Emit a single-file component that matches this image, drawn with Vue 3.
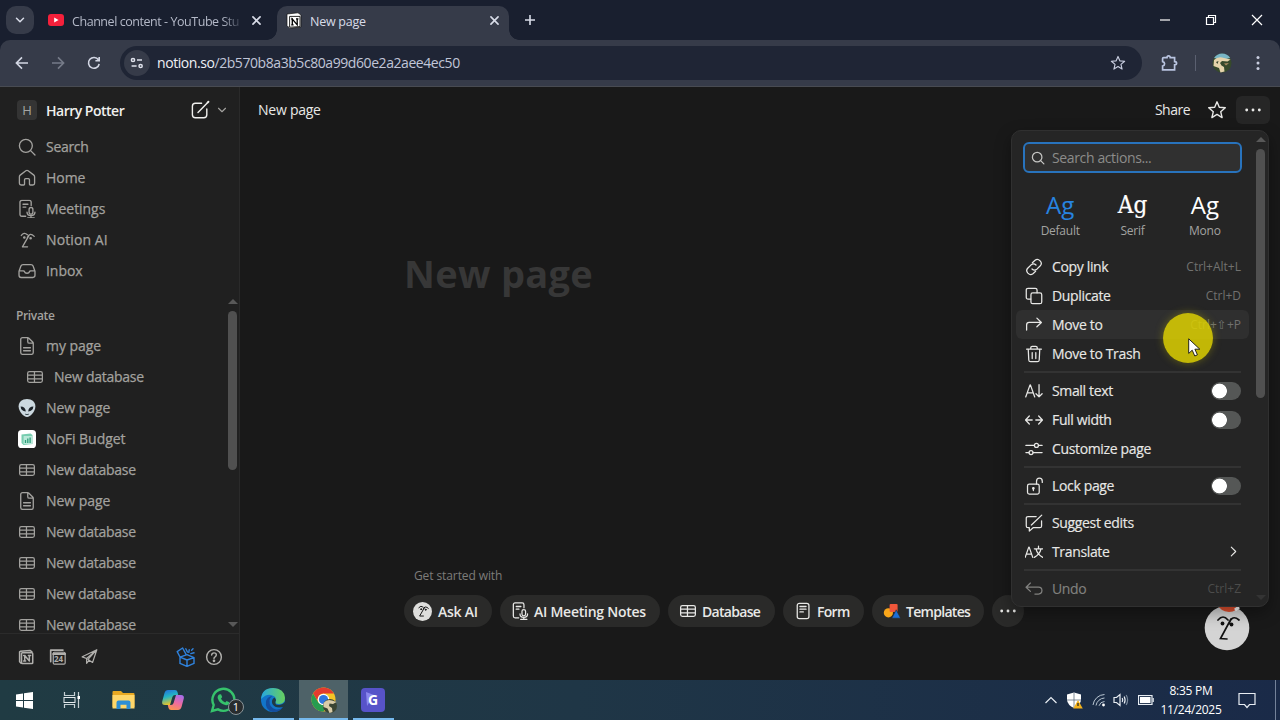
<template>
  <svg class="defs" width="0" height="0">
    <symbol id="i-search" viewBox="0 0 20 20"><circle cx="8.8" cy="8.8" r="6.8" /><path d="M13.8 13.8 18.4 18.4" /></symbol>
    <symbol id="i-home" viewBox="0 0 20 20"><path d="M2 8.6 Q2 7.6 2.8 7L8.8 2.4Q10 1.5 11.2 2.4L17.2 7Q18 7.6 18 8.6V15.6Q18 17.4 16.2 17.4H13.4Q12.6 17.4 12.6 16.6V11.8Q12.6 10.6 11.4 10.6H8.6Q7.4 10.6 7.4 11.8V16.6Q7.4 17.4 6.6 17.4H3.8Q2 17.4 2 15.6Z" /></symbol>
    <symbol id="i-meeting" viewBox="0 0 20 20"><path d="M8.6 17.6H4.6Q2.6 17.6 2.6 15.6V3Q2.6 1 4.6 1H12.4Q14.4 1 14.4 3V6.4M5.8 5H11M5.8 8H8.8" /><rect x="12.2" y="8.4" width="4" height="7" rx="2" /><path d="M10 13.2Q10 17 14.2 17Q18.4 17 18.4 13.2M14.2 17V19.3M10.8 19.4H17.6" /></symbol>
    <symbol id="i-face" viewBox="0 0 20 20"><path d="M4 5.2Q6.8 1.2 10.4 4.4M10.4 7.2Q13 1.6 17.6 6.2M12.4 4.6L5.2 17.2H10.6" /><circle cx="7.2" cy="7.4" r=".7" fill="currentColor" /><circle cx="13.8" cy="8.2" r=".7" fill="currentColor" /></symbol>
    <symbol id="i-inbox" viewBox="0 0 20 20"><path d="M1.6 10.2L3.6 4.8Q4.2 3.2 5.8 3.2H14.2Q15.8 3.2 16.4 4.8L18.4 10.2V14.6Q18.4 16.8 16.2 16.8H3.8Q1.6 16.8 1.6 14.6ZM1.8 9.8H6.2Q7.2 9.8 7.4 10.8Q7.8 12.4 10 12.4Q12.2 12.4 12.6 10.8Q12.8 9.8 13.8 9.8H18.2" /></symbol>
    <symbol id="i-page" viewBox="0 0 20 20"><path d="M3.4 3.2Q3.4 1.2 5.4 1.2H10.6Q11.4 1.2 12 1.8L16 5.8Q16.6 6.4 16.6 7.2V16.8Q16.6 18.8 14.6 18.8H5.4Q3.4 18.8 3.4 16.8ZM10.8 1.4V5.4Q10.8 7 12.4 7H16.4M6.4 11.8H13.6M6.4 15H13.6" /></symbol>
    <symbol id="i-table" viewBox="0 0 20 20"><rect x="1.8" y="4" width="16.4" height="12" rx="2" /><path d="M2 8H18M2 12H18M9.4 4V16" /></symbol>
    <symbol id="i-compose" viewBox="0 0 20 20"><path d="M11.6 3.2H5.4Q2.4 3.2 2.4 6.2V14.8Q2.4 17.8 5.4 17.8H13.8Q16.8 17.8 16.8 14.8V9M8 12.4L17 3.2" /><path d="M17.6 2.6L18.4 1.8" stroke-width="2" /></symbol>
    <symbol id="i-down" viewBox="0 0 20 20"><path d="M3 6.5L10 13.5L17 6.5" /></symbol>
    <symbol id="i-right" viewBox="0 0 20 20"><path d="M6 2L14 10L6 18" /></symbol>
    <symbol id="i-close" viewBox="0 0 20 20"><path d="M3.5 3.5L16.5 16.5M16.5 3.5L3.5 16.5" /></symbol>
    <symbol id="i-star" viewBox="0 0 20 20"><path d="M10 1.8L12.3 7.3L18.3 7.8L13.7 11.7L15.1 17.6L10 14.4L4.9 17.6L6.3 11.7L1.7 7.8L7.7 7.3Z" /></symbol>
    <symbol id="i-dots" viewBox="0 0 20 20"><g fill="currentColor" stroke="none"><circle cx="3" cy="10" r="1.6" /><circle cx="10" cy="10" r="1.6" /><circle cx="17" cy="10" r="1.6" /></g></symbol>
    <symbol id="i-link" viewBox="0 0 20 20"><path d="M8.2 5.2L11.2 2.6Q14 .4 16.8 3.2Q19.4 6 17 8.6L13.2 12.4Q10.4 14.6 7.8 12.2M11.8 14.8L8.8 17.4Q6 19.6 3.2 16.8Q.6 14 3 11.4L6.8 7.6Q9.6 5.4 12.2 7.8" /></symbol>
    <symbol id="i-duplicate" viewBox="0 0 20 20"><rect x="6.6" y="6.6" width="12" height="12" rx="2" /><path d="M6.4 13.4H3.4Q1.4 13.4 1.4 11.4V3.4Q1.4 1.4 3.4 1.4H11.4Q13.4 1.4 13.4 3.4V6.4" /></symbol>
    <symbol id="i-move" viewBox="0 0 20 20"><path d="M1.8 15.6V10Q1.8 7.2 4.6 7.2H18M13.2 2.4L18.2 7.2L13.2 12" /></symbol>
    <symbol id="i-trash" viewBox="0 0 20 20"><path d="M1.8 4.6H18.2M6.4 4.4V3Q6.4 1.4 8 1.4H12Q13.6 1.4 13.6 3V4.4M3.6 4.8L4.2 16.6Q4.3 18.6 6.3 18.6H13.7Q15.7 18.6 15.8 16.6L16.4 4.8M8 8.4V15M12 8.4V15" /></symbol>
    <symbol id="i-small" viewBox="0 0 20 20"><path d="M.8 16.6L5.6 3.2H6L10.8 16.6M2.6 12H9M15.6 3V16.4M12.2 13L15.6 16.6L19 13" /></symbol>
    <symbol id="i-width" viewBox="0 0 20 20"><path d="M8 10H.8M4.8 5.6L.6 10L4.8 14.4M12 10H19.2M15.2 5.6L19.4 10L15.2 14.4" /></symbol>
    <symbol id="i-sliders" viewBox="0 0 20 20"><path d="M1 6H10M15 6H19M1 14H4.4M9 14H19" /><circle cx="12.7" cy="6" r="2.2" /><circle cx="6.7" cy="14" r="2.2" /></symbol>
    <symbol id="i-lock" viewBox="0 0 20 20"><rect x="2.8" y="8" width="13" height="11" rx="2" /><path d="M12.8 7.8V4.6Q12.8 1.2 16 1.2Q19.2 1.2 19.2 4.6V6M9.3 12.4V15" /><circle cx="9.3" cy="12.6" r=".8" fill="currentColor" /></symbol>
    <symbol id="i-suggest" viewBox="0 0 20 20"><path d="M12.4 2.8H3.4Q1.4 2.8 1.4 4.8V13.2Q1.4 15.2 3.4 15.2H4.8V19L9 15.2H16.4Q18.4 15.2 18.4 13.2V7.6M8 11.4L18.6 1.2M8 11.4L7 12.2" /></symbol>
    <symbol id="i-translate" viewBox="0 0 20 20"><path d="M.2 16L4.2 4.6H4.6L8.6 16M1.6 12.4H7.2M10.4 6.4H19.8M15 3.6V6.2M17.8 6.6Q16.6 12.4 10.4 16M12.2 6.6Q13.6 12.6 19.8 16" /></symbol>
    <symbol id="i-undo" viewBox="0 0 20 20"><path d="M6 3.4L1.2 8L6 12.6M1.4 8H15Q18.8 8 18.8 11.8Q18.8 15.6 15 15.6H11" /></symbol>
    <symbol id="i-form" viewBox="0 0 20 20"><rect x="3.6" y="1.4" width="13" height="17.2" rx="2.4" /><path d="M6.6 5H13.4M6.6 8H13.4M6.6 11H10.4" /></symbol>
    <symbol id="i-cube" viewBox="0 0 20 20"><path d="M3.8 17.6L2 16V3.6L3 2.8L15.4 2L17.4 3.6" /><rect x="4.4" y="4.8" width="14" height="13.4" rx="1" /><path d="M8.4 15V8L14.2 15V8M7 8H8.8M13 8H15.8M7 15H9.6" /></symbol>
    <symbol id="i-calendar" viewBox="0 0 20 20"><path d="M2 16V2.4H16.4" stroke-width="2" /><rect x="5" y="5" width="14" height="14" rx="1.4" /><path d="M5 7H19" stroke-width="2.4" /></symbol>
    <symbol id="i-send" viewBox="0 0 20 20"><path d="M1.4 10.4L18.6 2L13.6 17L8.2 13.4L18.4 2.2M1.4 10.4L6.6 12.4V18L9.6 14.4M6.6 12.4L18.4 2.2" /></symbol>
    <symbol id="i-gift" viewBox="0 0 20 20"><path d="M4 10.2L11 7.6L18 10.6V16.4L11 19.4L4 16.4ZM4 10.2L11 13L18 10.6M11 13V19.2M4 10L1.2 4.6L6.6 1L9.8 6.8M9.8 1.8L11.4 5M12.8 5.4L13.2 2.8M14.8 6.6L18 5.8M15.6 3.2L17 1.8" /></symbol>
    <symbol id="i-help" viewBox="0 0 20 20"><circle cx="10" cy="10" r="8.2" /><path d="M7.4 7.8Q7.6 5.4 10 5.4Q12.6 5.4 12.6 7.6Q12.6 9 11.2 9.8Q10 10.4 10 11.8" /><circle cx="10" cy="14.2" r=".7" fill="currentColor" /></symbol>
  </svg>

  <div class="screen">
    <div class="tabs">
      <div class="tab-search"><svg class="icon s10"><use href="#i-down" /></svg></div>
      <div class="tab">
        <svg width="16" height="12" viewBox="0 0 16 12"><rect width="16" height="12" rx="3" fill="#f5203b" /><path d="M6.2 3.4L10.6 6L6.2 8.6Z" fill="#fff" /></svg>
        <span class="tab-title faded">Channel content - YouTube Stu</span>
        <svg class="icon s11 bold"><use href="#i-close" /></svg>
      </div>
      <div class="tab active">
        <svg width="16" height="17" viewBox="0 0 16 17"><path d="M1 2L12 .8L15 3V15L3.6 16.2L1 13.4Z" fill="#fff" stroke="#111" stroke-width=".7" /><path d="M3.6 4.4H14V14.6L3.6 15.2Z" fill="#fff" stroke="#111" stroke-width=".9" /><path d="M6.3 12.8V7L11.2 12.8V6.8M5.2 7H7M10 6.8H12.4M5.2 12.8H7.6" fill="none" stroke="#000" stroke-width="1.3" /></svg>
        <span class="tab-title">New page</span>
        <svg class="icon s11 bold"><use href="#i-close" /></svg>
      </div>
      <svg class="plus" width="12" height="12" viewBox="0 0 12 12"><path d="M6 1V11M1 6H11" /></svg>
      <div class="window-buttons">
        <span><svg width="12" height="12" viewBox="0 0 12 12"><path d="M1 6H11" /></svg></span>
        <span><svg width="12" height="12" viewBox="0 0 12 12"><path d="M1.5 3.5H8.5V10.5H1.5ZM3.5 3.5V1.5H10.5V8.5H8.5" /></svg></span>
        <span><svg width="12" height="12" viewBox="0 0 12 12"><path d="M1 1L11 11M11 1L1 11" /></svg></span>
      </div>
    </div>

    <div class="toolbar">
      <span class="nav"><svg width="14" height="14" viewBox="0 0 14 14"><path d="M13 7H1.6M7 1.4L1.4 7L7 12.6" /></svg></span>
      <span class="nav off"><svg width="14" height="14" viewBox="0 0 14 14"><path d="M1 7H12.4M7 1.4L12.6 7L7 12.6" /></svg></span>
      <span class="nav"><svg width="14" height="14" viewBox="0 0 14 14"><path d="M12.2 8A5.4 5.4 0 1 1 11.4 3.8M12.2 1V4.8H8.4" /></svg></span>
      <div class="omnibox">
        <span class="site"><svg width="14" height="12" viewBox="0 0 14 12"><circle cx="3" cy="3" r="1.6" /><path d="M7 3H12M1.6 9H6.6" /><circle cx="10.6" cy="9" r="1.6" /></svg></span>
        <span class="url">notion.so<i>/2b570b8a3b5c80a99d60e2a2aee4ec50</i></span>
        <svg class="icon s16"><use href="#i-star" /></svg>
      </div>
      <svg class="puzzle" width="18" height="18" viewBox="0 0 18 18"><path d="M3.6 3.6H7Q7 1.8 8.6 1.8Q10.2 1.8 10.2 3.6H14.6V7.6Q16.6 7.6 16.6 9.2Q16.6 10.8 14.6 10.8V15.8H2.6V12Q4.6 11.6 4.6 9.8Q4.6 8 2.6 7.6V4.6Q2.6 3.6 3.6 3.6Z" /></svg>
      <span class="divider"></span>
      <svg class="avatar" width="20" height="20" viewBox="0 0 20 20"><circle cx="10" cy="10" r="9.6" fill="#374a2c" /><path d="M2 5Q5 .4 10 .4Q15.5 .4 18.2 5Q10 7.5 2 5Z" fill="#79b6c6" /><path d="M2 7Q6 3 12 5L18.5 6.5L15.5 8.5L10 8L8 10L9.5 12.5L12 14L12.5 18.5L8.5 19.5L7 15L1.5 13Z" fill="#e5d3ab" /><path d="M4 9L6.500 8L5.500 11Z" fill="#33422b" /><path d="M12 10.500L17 10L14 12.500Z" fill="#a88b61" /></svg>
      <svg class="kebab" width="4" height="16" viewBox="0 0 4 16"><circle cx="2" cy="2.500" r="1.500" /><circle cx="2" cy="8" r="1.500" /><circle cx="2" cy="13.500" r="1.500" /></svg>
    </div>

    <div class="app">
      <aside class="sidebar">
        <div class="workspace">
          <span class="badge">H</span>
          <b>Harry Potter</b>
          <svg class="icon s20"><use href="#i-compose" /></svg>
          <svg class="icon s10 chev"><use href="#i-down" /></svg>
        </div>
        <nav>
          <div v-for="item in navItems" :key="item.label" class="row" :class="item.icon + '-row'">
            <svg class="icon s20"><use :href="'#i-' + item.icon" /></svg>{{ item.label }}
          </div>
        </nav>
        <div class="private">
          <div class="section">Private</div>
          <div v-for="(item, i) in pages" :key="i" class="row" :class="[item.icon, { child: item.child }]">
            <svg v-if="item.icon === 'alien'" width="18" height="20" viewBox="0 0 18 20"><path d="M9 1C14 1 17.400 4.200 17.400 8.400C17.400 13 12.400 19 9 19C5.600 19 .6 13 .6 8.400C.6 4.200 4 1 9 1Z" fill="#cbd8df" /><path d="M2.600 8.600Q7.400 8.800 7.800 13.400Q3 13.200 2.600 8.600ZM15.400 8.600Q10.600 8.800 10.200 13.400Q15 13.200 15.400 8.600Z" fill="#1b2228" /><path d="M7.200 16.200Q9 17 10.800 16.200" fill="none" stroke="#3b4950" /></svg>
            <svg v-else-if="item.icon === 'budget'" width="18" height="18" viewBox="0 0 18 18"><rect width="18" height="18" rx="3.600" fill="#fff" /><path d="M3.500 4.500L12.500 3.500L14.500 5V14L5.500 15L3.500 13Z" fill="#78cdb0" /><rect x="5.600" y="6" width="8.400" height="8" fill="#b8e8d8" /><path d="M7.500 13V10M9.800 13V8.500M12.100 13V7.500" stroke="#2c9c78" stroke-width="1.300" /></svg>
            <svg v-else class="icon s20"><use :href="'#i-' + item.icon" /></svg>
            {{ item.label }}
          </div>
          <div class="scroll"><i class="up"></i><i class="thumb"></i><i class="dn"></i></div>
        </div>
        <footer>
          <svg class="icon s16 cube"><use href="#i-cube" /></svg>
          <span class="cal"><svg class="icon s17"><use href="#i-calendar" /></svg><em>24</em></span>
          <svg class="icon s17"><use href="#i-send" /></svg>
          <svg class="icon s20 gift"><use href="#i-gift" /></svg>
          <svg class="icon s18"><use href="#i-help" /></svg>
        </footer>
      </aside>

      <main>
        <header>
          <span class="crumb">New page</span>
          <span class="share">Share</span>
          <svg class="icon s20"><use href="#i-star" /></svg>
          <span class="more"><svg class="icon s18"><use href="#i-dots" /></svg></span>
        </header>
        <h1>New page</h1>
        <div class="started">
          <p>Get started with</p>
          <div class="chips">
            <div v-for="chip in chips" :key="chip.icon" class="chip" :class="'chip-' + chip.icon" :style="{ width: chip.width + 'px' }">
              <span v-if="chip.icon === 'face'" class="ai"><svg class="icon s16"><use href="#i-face" /></svg></span>
              <svg v-else-if="chip.icon === 'shapes'" width="18" height="16" viewBox="0 0 18 16"><circle cx="5.400" cy="9.800" r="4.600" fill="#f9a61a" /><rect x="6.600" y="1" width="8" height="8" rx="1" fill="#f0563a" /><path d="M13.200 6.800L17.600 15.200H8.800Z" fill="#1b6fd6" stroke="#2a2a29" stroke-width=".6" /></svg>
              <svg v-else class="icon s18"><use :href="'#i-' + chip.icon" /></svg>
              <span v-if="chip.label">{{ chip.label }}</span>
            </div>
          </div>
        </div>

        <div class="assistant">
          <svg width="46" height="52" viewBox="0 0 46 52"><circle cx="23" cy="29" r="22.300" fill="#d4d4d4" /><path d="M13 5Q16 12 25 13Q33 13 36 5Z" fill="#e2502f" /><path d="M31 11L35 8" stroke="#fff" stroke-width="3" /><path d="M14 21Q19 15 24 21M25 25Q28 15 35 21M27 20L16.500 39.500L23 40" fill="none" stroke="#111" stroke-width="1.700" stroke-linecap="round" /><circle cx="18.500" cy="24.500" r="1.900" fill="#111" /><circle cx="27.500" cy="25.500" r="1.900" fill="#111" /></svg>
        </div>

        <div class="menu">
          <div class="menu-body">
            <div class="search"><svg class="icon s14"><use href="#i-search" /></svg>Search actions...</div>
            <div class="fonts">
              <div v-for="font in fonts" :key="font" :class="font.toLowerCase()"><b>Ag</b><span>{{ font }}</span></div>
            </div>
            <template v-for="(item, i) in actions" :key="i">
              <hr v-if="!item" />
              <div v-else class="item" :class="{ hover: item.hover, disabled: item.disabled }">
                <svg class="icon s18"><use :href="'#i-' + item.icon" /></svg>
                <span>{{ item.label }}</span>
                <kbd v-if="item.keys">{{ item.keys }}</kbd>
                <i v-if="item.toggle" class="toggle"></i>
                <svg v-if="item.arrow" class="icon s11 arrow"><use href="#i-right" /></svg>
              </div>
            </template>
          </div>
          <div class="scroll"><i class="up"></i><i class="thumb"></i><i class="dn"></i></div>
        </div>
      </main>
    </div>

    <div class="taskbar">
      <span class="task start"><svg width="17" height="17" viewBox="0 0 17 17"><path d="M0 2.400L7 1.400V8H0ZM8 1.200L17 0V8H8ZM0 9H7V15.600L0 14.600ZM8 9H17V17L8 15.800Z" fill="#fff" /></svg></span>
      <span class="task view"><svg width="18" height="18" viewBox="0 0 18 18"><path d="M1.500 1V4.500H11.500V1M1.500 17V13.500H11.500V17M15.500 1V17" fill="none" stroke="#c6d0d4" stroke-width="1.200" /><rect x="1" y="6.500" width="11" height="5" fill="none" stroke="#e6ecef" /><rect x="14.500" y="5" width="2.500" height="3" fill="#fff" /></svg></span>
      <span class="task"><svg width="23" height="20" viewBox="0 0 23 20"><path d="M.5 2Q.5 1 1.500 1H9L11 3H21.500Q22.500 3 22.500 4V17H.5Z" fill="#e9a922" /><path d="M.5 5H22.500V18.500H.5Z" fill="#ffd76a" /><path d="M4.500 19V12.500Q4.500 10.500 6.500 10.500H16.500Q18.500 10.500 18.500 12.500V19H14.500V14.800H8.500V19Z" fill="#2d8fd5" /></svg></span>
      <span class="task"><svg width="24" height="22" viewBox="0 0 24 22"><defs><linearGradient id="cpA" x1="0" y1="0" x2=".3" y2="1"><stop offset="0" stop-color="#2368df" /><stop offset=".5" stop-color="#24b5c4" /><stop offset="1" stop-color="#e7c429" /></linearGradient><linearGradient id="cpB" x1=".7" y1="0" x2=".3" y2="1"><stop offset="0" stop-color="#a86de8" /><stop offset=".5" stop-color="#ed6ba2" /><stop offset="1" stop-color="#fb9350" /></linearGradient></defs><path d="M7 1H14Q16 1 16.500 3L17.200 6H14Q12 6 11.400 8L9 16H4Q.5 16 1.200 12.500L3.500 4Q4.400 1 7 1Z" fill="url(#cpA)" /><path d="M17 21H10Q8 21 7.500 19L6.800 16H10Q12 16 12.600 14L15 6H20Q23.500 6 22.800 9.500L20.500 18Q19.600 21 17 21Z" fill="url(#cpB)" /></svg></span>
      <span class="task"><svg width="26" height="26" viewBox="0 0 26 26"><path d="M2 24L3.700 18A11 11 0 1 1 8 22.400Z" fill="#203943" stroke="#36c36c" stroke-width="2.400" /><path d="M9 7.500L11 7.200L12.200 10L11 11.800Q12.500 14.500 15.200 15.500L16.600 14L19.200 15.300Q19 18.500 16 18.300Q9.500 17 7.600 11Q7.400 8.600 9 7.500Z" fill="#36c36c" /></svg><i class="count">1</i></span>
      <span class="task run"><svg width="26" height="26" viewBox="0 0 26 26"><defs><linearGradient id="edA"><stop offset="0" stop-color="#26a7e0" /><stop offset="1" stop-color="#68d05c" /></linearGradient></defs><circle cx="13" cy="13" r="12" fill="#1275c9" /><path d="M1 12Q2 1 13 1Q24.500 1.500 25 11Q25 17 18.500 17Q15 17 15.500 14.500Q17 12 14.500 9.500Q8 5 1 12Z" fill="url(#edA)" /><path d="M9.500 13Q9 21 16 22.500Q20 23 23.500 19.500Q20 25 13 25Q4.500 23 6 14Q7.500 9.500 12.500 9Q10 10.500 9.500 13Z" fill="#154d9c" /><path d="M15.500 14.500Q14.500 18.500 19.500 18Q23 17.800 24.800 15L25 19.400Q16 22.500 12.400 17Q10.800 12.500 14.500 10.500Q16.500 12.500 15.500 14.500Z" fill="#203943" /></svg></span>
      <span class="task run current"><svg width="27" height="27" viewBox="0 0 27 27"><circle cx="12.500" cy="12.500" r="12" fill="#f5c526" /><path d="M2.100 6.500A12 12 0 0 1 22.900 6.500H12.500A6 6 0 0 0 7.300 15.500Z" fill="#e33b2e" /><path d="M2.100 6.500A12 12 0 0 0 12.500 24.500L17.700 15.500H7.300Z" fill="#279c50" /><circle cx="12.500" cy="12.500" r="5.800" fill="#fff" /><circle cx="12.500" cy="12.500" r="4.600" fill="#2f77df" /><circle cx="19" cy="19" r="7" fill="#3a4433" /><path d="M12.500 16Q16 11.500 21 13.500L25.500 15L22 17L18.500 16.500L18 19L21 21L21.500 25L18.500 26L16.500 21.500L12.500 20Z" fill="#d8cba8" /></svg></span>
      <span class="task run"><svg width="24" height="24" viewBox="0 0 24 24"><rect width="24" height="24" rx="4" fill="#5753c9" /><path d="M5 4L13 7L6 18Z" fill="#8b88ee" /></svg><b class="g">G</b></span>

      <div class="tray">
        <svg width="14" height="8" viewBox="0 0 14 8"><path d="M1.500 7L7 1.500L12.500 7" /></svg>
        <svg class="shield" width="17" height="17" viewBox="0 0 17 17"><path d="M8 .5L15 2.500V8Q14.500 13 8 16Q1.500 13 1 8V2.500Z" fill="#fff" stroke="none" /><path d="M8 1V16M1 8H15" stroke="#60707f" stroke-width=".8" /><path d="M12 8L16.800 16.500H7.200Z" fill="#f3b21c" stroke="none" /><path d="M12 11V14" stroke="#222" /></svg>
        <svg width="14" height="14" viewBox="0 0 14 14"><path d="M1 12A12 12 0 0 1 12.500 1.500M4 12.500A9 9 0 0 1 12.500 5M7 12.800A6 6 0 0 1 12.500 8.500" stroke-width="1" stroke="#b9c6d2" /><circle cx="11.500" cy="12" r="1.400" fill="#fff" stroke="none" /></svg>
        <svg class="speaker" width="16" height="14" viewBox="0 0 16 14"><path d="M1 4.500H3.500L7 1.500V12.500L3.500 9.500H1ZM9.200 5Q10.300 7 9.200 9M11.200 3.500Q13 7 11.200 10.500" /><path d="M13.200 2Q16 7 13.200 12" stroke="#78889a" /></svg>
        <svg class="battery" width="16" height="10" viewBox="0 0 16 10"><rect x=".5" y=".5" width="13.500" height="9" /><rect x="2" y="2" width="10.500" height="6" fill="#fff" stroke="none" /><path d="M15.200 3V7" /></svg>
        <div class="clock">8:35 PM<br />11/24/2025</div>
        <svg class="notice" width="18" height="17" viewBox="0 0 18 17"><path d="M1 1.500H17V12.500H11.500L9 15.500L6.500 12.500H1Z" /></svg>
        <i class="peek"></i>
      </div>
    </div>

    <div class="halo"></div>
    <svg class="cursor" width="13" height="19" viewBox="0 0 13 19"><path d="M.7 .8V15.400L4.200 12.200L6.800 18L9.400 16.800L6.900 11.200H11.800Z" fill="#fff" stroke="#111" stroke-width=".9" /></svg>
  </div>
</template>

<script setup>
const navItems = [
  { icon: 'search', label: 'Search' },
  { icon: 'home', label: 'Home' },
  { icon: 'meeting', label: 'Meetings' },
  { icon: 'face', label: 'Notion AI' },
  { icon: 'inbox', label: 'Inbox' },
]

const pages = [
  { icon: 'page', label: 'my page' },
  { icon: 'table', label: 'New database', child: true },
  { icon: 'alien', label: 'New page' },
  { icon: 'budget', label: 'NoFi Budget' },
  { icon: 'table', label: 'New database' },
  { icon: 'page', label: 'New page' },
  { icon: 'table', label: 'New database' },
  { icon: 'table', label: 'New database' },
  { icon: 'table', label: 'New database' },
  { icon: 'table', label: 'New database' },
]

const chips = [
  { icon: 'face', label: 'Ask AI', width: 88 },
  { icon: 'meeting', label: 'AI Meeting Notes', width: 160 },
  { icon: 'table', label: 'Database', width: 107 },
  { icon: 'form', label: 'Form', width: 81 },
  { icon: 'shapes', label: 'Templates', width: 112 },
  { icon: 'dots', label: '', width: 32 },
]

const fonts = ['Default', 'Serif', 'Mono']

// null marks a separator
const actions = [
  { icon: 'link', label: 'Copy link', keys: 'Ctrl+Alt+L' },
  { icon: 'duplicate', label: 'Duplicate', keys: 'Ctrl+D' },
  { icon: 'move', label: 'Move to', keys: 'Ctrl+⇧+P', hover: true },
  { icon: 'trash', label: 'Move to Trash' },
  null,
  { icon: 'small', label: 'Small text', toggle: true },
  { icon: 'width', label: 'Full width', toggle: true },
  { icon: 'sliders', label: 'Customize page' },
  null,
  { icon: 'lock', label: 'Lock page', toggle: true },
  null,
  { icon: 'suggest', label: 'Suggest edits' },
  { icon: 'translate', label: 'Translate', arrow: true },
  null,
  { icon: 'undo', label: 'Undo', keys: 'Ctrl+Z', disabled: true },
]
</script>

<style>
body {
  margin: 0;
  overflow: hidden;
  background: #191919;
}
</style>

<style scoped>
.defs {
  position: absolute;
}

.screen {
  position: relative;
  width: 1280px;
  height: 720px;
  display: flex;
  flex-direction: column;
  overflow: hidden;
  background: #191f2f;
  color: #e8e8e6;
  font-family: 'Open Sans', 'Noto Sans', sans-serif;
  font-size: 14px;
}

.screen * {
  box-sizing: border-box;
}

svg {
  flex: none;
}

.icon {
  fill: none;
  stroke: currentColor;
  stroke-width: 1.4;
  stroke-linecap: round;
  stroke-linejoin: round;
}

.bold { stroke-width: 3; }
.s10 { width: 10px; height: 10px; stroke-width: 3; }
.s11 { width: 11px; height: 11px; }
.s14 { width: 14px; height: 14px; stroke-width: 1.8; }
.s16 { width: 16px; height: 16px; }
.s17 { width: 17px; height: 17px; }
.s18 { width: 18px; height: 18px; }
.s20 { width: 20px; height: 20px; }

/* browser tabs */
.tabs {
  height: 40px;
  display: flex;
  align-items: center;
  color: #d8dce8;
  font-size: 12.5px;
}

.tab-search {
  width: 28px;
  height: 28px;
  margin-left: 6px;
  border-radius: 10px;
  background: #363b49;
  display: flex;
  align-items: center;
  justify-content: center;
}

.tab {
  width: 238px;
  height: 34px;
  margin-top: 6px;
  padding: 0 10px 6px 14px;
  display: flex;
  align-items: center;
}

.tab-title {
  flex: 1;
  margin-left: 8px;
  padding-top: 2px;
  white-space: nowrap;
  letter-spacing: -0.25px;
}

.faded {
  color: #b4b9c8;
  letter-spacing: -0.45px;
  mask-image: linear-gradient(90deg, #000 84%, transparent 96%);
}

.tab.active {
  position: relative;
  width: 232px;
  margin-left: 5px;
  padding: 0 9px 6px 9px;
  border-radius: 10px 10px 0 0;
  background: #363b49;
}

.tab.active::before,
.tab.active::after {
  content: '';
  position: absolute;
  bottom: 0;
  width: 10px;
  height: 10px;
}

.tab.active::before {
  left: -10px;
  background: radial-gradient(circle at 0 0, transparent 9.5px, #363b49 10px);
}

.tab.active::after {
  right: -10px;
  background: radial-gradient(circle at 100% 0, transparent 9.5px, #363b49 10px);
}

.plus {
  margin-left: 15px;
  stroke: #d8dce8;
  stroke-width: 1.6;
}

.window-buttons {
  margin-left: auto;
  display: flex;
}

.window-buttons span {
  width: 46px;
  display: flex;
  justify-content: center;
  fill: none;
  stroke: #fff;
  stroke-width: 1.2;
}

/* address bar */
.toolbar {
  height: 47px;
  padding: 0 20px 1px 4px;
  display: flex;
  align-items: center;
  border-radius: 10px 10px 0 0;
  border-bottom: 1px solid #484b52;
  background: #363b49;
  color: #c9cee0;
}

.nav {
  width: 36px;
  display: flex;
  justify-content: center;
  fill: none;
  stroke: #d3d7e4;
  stroke-width: 1.6;
}

.nav.off {
  stroke: #767b89;
}

.omnibox {
  width: 1022px;
  height: 34px;
  margin-left: 8px;
  padding: 0 16px 0 4px;
  border-radius: 17px;
  background: #1f2535;
  display: flex;
  align-items: center;
}

.site {
  width: 26px;
  height: 26px;
  border-radius: 50%;
  background: #363b49;
  display: flex;
  align-items: center;
  justify-content: center;
  fill: none;
  stroke: #e0e3ed;
  stroke-width: 1.5;
}

.url {
  flex: 1;
  margin-left: 7px;
  color: #eef0f6;
  letter-spacing: -0.43px;
}

.url i {
  font-style: normal;
  color: #c1c6d8;
}

.puzzle {
  margin-left: 18px;
  fill: none;
  stroke: #b9c4e0;
  stroke-width: 1.7;
}

.divider {
  width: 1px;
  height: 16px;
  margin: 0 16px 0 17px;
  background: #5b6070;
}

.kebab {
  margin-left: auto;
  fill: #c9cee0;
}

/* page area */
.app {
  height: 593px;
  display: flex;
}

.sidebar {
  width: 240px;
  display: flex;
  flex-direction: column;
  border-right: 1px solid #2a2a2a;
  background: #202020;
  color: #a3a29f;
}

.workspace {
  height: 44px;
  padding: 2px 12px 0 17px;
  display: flex;
  align-items: center;
  color: #f0f0ee;
}

.workspace b {
  flex: 1;
  margin-left: 9px;
  font-weight: 600;
  letter-spacing: -0.5px;
}

.badge {
  width: 20px;
  height: 20px;
  border-radius: 4px;
  background: #343434;
  color: #a5a5a3;
  font-size: 13px;
  line-height: 20px;
  text-align: center;
}

.chev {
  margin-left: 7px;
  color: #a3a29f;
  stroke-width: 2.2;
}

.row {
  height: 31px;
  padding-left: 17px;
  display: flex;
  align-items: center;
  gap: 9px;
  letter-spacing: -0.05px;
  white-space: nowrap;
  -webkit-text-stroke: 0.25px currentColor;
}

.row > svg:not(.icon) {
  margin: 0 1px;
}

.row .icon {
  padding: 0.5px;
}

.row.search-row {
  letter-spacing: -0.3px;
}

.row.face-row {
  letter-spacing: 0.1px;
}

.row.table {
  letter-spacing: -0.25px;
}

.row.table .icon {
  padding: 1px;
}

.row.child {
  padding-left: 25px;
}

.private {
  position: relative;
  flex: 1;
  min-height: 0;
  margin-top: 12px;
  overflow: hidden;
}

.section {
  height: 32px;
  padding-left: 16px;
  font-size: 12px;
  font-weight: 600;
  line-height: 35px;
  letter-spacing: -0.35px;
}

.scroll {
  position: absolute;
  top: 1px;
  right: 2px;
  bottom: 0;
  width: 9px;
  display: flex;
  flex-direction: column;
  align-items: center;
}

.scroll i {
  flex: none;
}

.up,
.dn {
  border: 5px solid transparent;
  border-top: 0;
  border-bottom: 5px solid #585858;
}

.dn {
  margin-top: auto;
  margin-bottom: 6px;
  transform: rotate(180deg);
}

.thumb {
  width: 9px;
  height: 159px;
  margin-top: 7px;
  border-radius: 5px;
  background: #505050;
}

footer {
  flex: none;
  height: 47px;
  padding: 0 16px 1px 18px;
  display: flex;
  align-items: center;
  gap: 15px;
  border-top: 1px solid #2b2b2b;
  color: #b1b0ad;
}

.cube {
  stroke-width: 1.9;
}

.cal {
  position: relative;
  height: 17px;
}

.cal em {
  position: absolute;
  left: 5px;
  top: 6px;
  font-size: 8px;
  font-style: normal;
  font-weight: 700;
  line-height: 10px;
}

.gift {
  margin-left: auto;
  color: #2f82dc;
}

.gift + .icon {
  margin-left: -6px;
  stroke-width: 1.6;
}

main {
  position: relative;
  flex: 1;
  background: #191919;
}

header {
  height: 45px;
  padding: 0 10px 0 18px;
  display: flex;
  align-items: center;
  letter-spacing: -0.25px;
}

.crumb {
  flex: 1;
}

.share {
  margin-right: 17px;
  letter-spacing: -0.5px;
}

.more {
  width: 34px;
  height: 28px;
  margin-left: 9px;
  border-radius: 6px;
  background: #262626;
  display: flex;
  align-items: center;
  justify-content: center;
}

h1 {
  margin: 109px 0 0 164px;
  color: #373737;
  font-size: 38px;
  line-height: 64px;
  letter-spacing: 0.3px;
}

.started {
  margin: 261px 0 0 164px;
}

.started p {
  margin: 0 0 9px 10px;
  color: #7d7c79;
  font-size: 12px;
  line-height: 20px;
  letter-spacing: -0.1px;
}

.chips {
  display: flex;
  gap: 8px;
}

.chip {
  height: 32px;
  padding-left: 11px;
  border-radius: 16px;
  background: #2a2a29;
  display: flex;
  align-items: center;
  gap: 5px;
  font-weight: 600;
  letter-spacing: -0.25px;
  white-space: nowrap;
}

.chip-face {
  padding-left: 9px;
  gap: 6px;
}

.chip-table,
.chip-form,
.chip-shapes {
  letter-spacing: -0.7px;
}

.chip-dots {
  padding-left: 7px;
}

.ai {
  width: 19px;
  height: 19px;
  border-radius: 50%;
  background: #dededc;
  color: #111;
  display: flex;
  align-items: center;
  justify-content: center;
}

.ai .icon {
  width: 14px;
  height: 14px;
}

.assistant {
  position: absolute;
  right: 30px;
  top: 512px;
}

/* actions menu */
.menu {
  position: absolute;
  left: 771px;
  top: 43px;
  width: 258px;
  height: 477px;
  border: 1px solid #303030;
  border-radius: 10px;
  background: #252525;
  box-shadow: 0 6px 16px rgba(0, 0, 0, 0.35);
  overflow: hidden;
}

.menu-body {
  width: 233px;
  margin-left: 4px;
}

.search {
  height: 31px;
  margin: 11px 7px 0;
  padding-left: 6px;
  border: 2px solid #2873bd;
  border-radius: 6px;
  background: #303030;
  color: #8c8c8a;
  display: flex;
  align-items: center;
  gap: 7px;
  letter-spacing: -0.37px;
}

.search .icon {
  color: #c4c4c2;
}

.fonts {
  height: 79px;
  padding: 13px 8px 0;
  display: flex;
}

.fonts div {
  flex: 1;
  display: flex;
  flex-direction: column;
  align-items: center;
}

.fonts b {
  height: 37px;
  font-size: 24px;
  font-weight: 400;
  line-height: 37px;
  color: #fff;
}

.fonts .default b {
  color: #2784e0;
}

.fonts .serif b {
  font-family: 'DejaVu Serif Condensed', 'DejaVu Serif', serif;
  font-stretch: condensed;
  font-size: 24px;
  line-height: 38px;
  -webkit-text-stroke: 0.2px #fff;
}

.fonts span {
  font-size: 12px;
  line-height: 16px;
  letter-spacing: -0.25px;
  color: #a3a3a1;
}

.item {
  height: 29px;
  padding: 0 8px 0 9px;
  border-radius: 6px;
  display: flex;
  align-items: center;
}

.item span {
  flex: 1;
  margin-left: 9px;
  letter-spacing: -0.35px;
  -webkit-text-stroke: 0.15px currentColor;
}

.item.hover {
  background: #2f2f2f;
}

.item.disabled {
  color: #81817f;
}

kbd {
  font: 12px 'Open Sans', 'DejaVu Sans', sans-serif;
  color: #71716f;
}

.disabled kbd {
  color: #4c4c4b;
}

.toggle {
  width: 30px;
  height: 18px;
  border-radius: 9px;
  background: radial-gradient(circle at 8.5px 9px, #fff 7px, #555756 7.7px);
}

.arrow {
  margin-right: 2px;
  stroke-width: 2;
}

hr {
  height: 2px;
  margin: 3px 8px;
  border: 0;
  background: #333;
}

.menu .scroll {
  right: 3px;
  top: 6px;
}

.menu .thumb {
  height: 249px;
}

.menu .dn {
  opacity: 0.3;
}

/* taskbar */
.taskbar {
  height: 40px;
  display: flex;
  background: linear-gradient(90deg, #203b43, #1f3646 45%, #1a2a48);
}

.task {
  position: relative;
  width: 50px;
  display: flex;
  align-items: center;
  justify-content: center;
}

.task.start {
  width: 48px;
}

.task.view {
  padding-right: 2px;
}

.run::after {
  content: '';
  position: absolute;
  left: 5px;
  right: 4px;
  bottom: 0;
  height: 2px;
  background: #76b9ed;
}

.current {
  background: #4e6268;
  width: 49px;
  margin-left: 1px;
  padding-left: 1px;
}

.current::after {
  left: 0;
  right: 0;
}

.count {
  position: absolute;
  left: 30px;
  top: 19px;
  width: 16px;
  height: 16px;
  border: 1px solid #8b969a;
  border-radius: 50%;
  background: #282c2e;
  color: #fff;
  font-size: 11px;
  font-style: normal;
  line-height: 14px;
  text-align: center;
}

.g {
  position: absolute;
  color: #fff;
  font-size: 14px;
  line-height: 20px;
}

.tray {
  margin-left: auto;
  display: flex;
  align-items: center;
  fill: none;
  stroke: #e8edf3;
  stroke-width: 1.2;
}

.shield {
  margin: 0 9px 0 8px;
}

.speaker {
  margin-left: 7px;
}

.battery {
  margin-left: 9px;
}

.clock {
  width: 74px;
  color: #fff;
  font-size: 12px;
  line-height: 19px;
  letter-spacing: -0.25px;
  text-align: center;
  white-space: nowrap;
}

.notice {
  margin-left: 10px;
}

.peek {
  width: 1px;
  height: 40px;
  margin: 0 4px 0 19px;
  background: #74829a;
}

.halo {
  position: absolute;
  left: 1163px;
  top: 313px;
  width: 50px;
  height: 50px;
  border-radius: 50%;
  background: rgba(218, 206, 2, 0.87);
  box-shadow: 0 0 9px rgba(190, 180, 0, 0.4);
}

.cursor {
  position: absolute;
  left: 1188px;
  top: 338px;
}
</style>
